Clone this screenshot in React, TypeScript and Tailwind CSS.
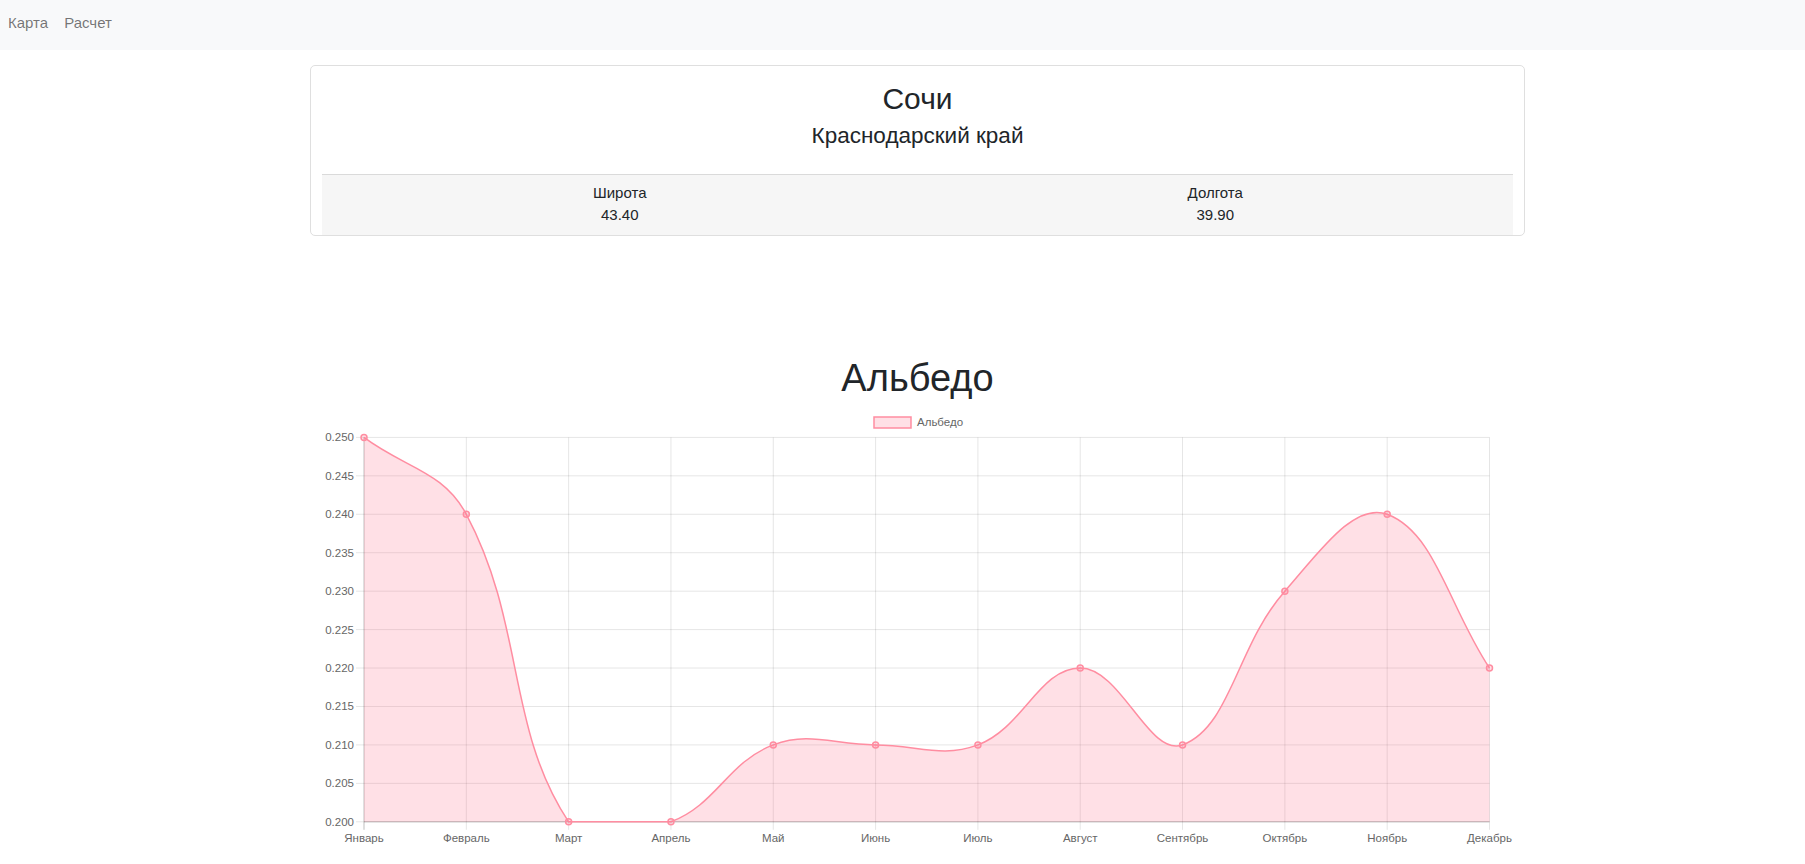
import React from 'react';

const months = ['Январь', 'Февраль', 'Март', 'Апрель', 'Май', 'Июнь', 'Июль', 'Август', 'Сентябрь', 'Октябрь', 'Ноябрь', 'Декабрь'];
const values = [0.25, 0.24, 0.2, 0.2, 0.21, 0.21, 0.21, 0.22, 0.21, 0.23, 0.24, 0.22];

// chart area inside the svg
const W = 1215;
const H = 462;
const left = 54;
const right = 1179.5;
const top = 35.4;
const bottom = 419.8;
const yMin = 0.2;
const yMax = 0.25;

type Pt = { x: number; y: number };

const yOf = (v: number) => bottom - ((v - yMin) / (yMax - yMin)) * (bottom - top);
const clamp = (v: number, lo: number, hi: number) => Math.max(lo, Math.min(hi, v));

function buildPath(pts: Pt[]) {
  const cps = pts.map((cur, i) => {
    const prev = pts[i - 1] ?? cur;
    const next = pts[i + 1] ?? cur;
    const d01 = Math.hypot(cur.x - prev.x, cur.y - prev.y);
    const d12 = Math.hypot(next.x - cur.x, next.y - cur.y);
    let s01 = d01 / (d01 + d12);
    let s12 = d12 / (d01 + d12);
    if (isNaN(s01)) s01 = 0;
    if (isNaN(s12)) s12 = 0;
    const fa = 0.4 * s01;
    const fb = 0.4 * s12;
    return {
      prev: { x: clamp(cur.x - fa * (next.x - prev.x), left, right), y: clamp(cur.y - fa * (next.y - prev.y), top, bottom) },
      next: { x: clamp(cur.x + fb * (next.x - prev.x), left, right), y: clamp(cur.y + fb * (next.y - prev.y), top, bottom) },
    };
  });
  let d = `M ${pts[0].x} ${pts[0].y}`;
  for (let i = 1; i < pts.length; i++) {
    const a = cps[i - 1].next;
    const b = cps[i].prev;
    d += ` C ${a.x} ${a.y} ${b.x} ${b.y} ${pts[i].x} ${pts[i].y}`;
  }
  return d;
}

function AlbedoChart() {
  const step = (right - left) / (months.length - 1);
  const pts = values.map((v, i) => ({ x: left + i * step, y: yOf(v) }));
  const line = buildPath(pts);
  const area = `${line} L ${right} ${bottom} L ${left} ${bottom} Z`;
  const ticks = Array.from({ length: 11 }, (_, i) => yMin + i * 0.005);

  return (
    <svg width={W} height={H} className="block" style={{ fontFamily: '"Liberation Sans", Arial, sans-serif' }}>
      {/* legend */}
      <rect x={564} y={15} width={37} height={11} fill="rgba(255,99,132,0.2)" stroke="#ff8da1" strokeWidth={1.5} />
      <text x={607} y={24} fontSize={11.5} fill="#666">Альбедо</text>

      {/* horizontal grid */}
      {ticks.map((t, i) => {
        const y = yOf(t);
        return (
          <g key={i}>
            <line x1={left - 8} x2={right} y1={y} y2={y} stroke="rgba(0,0,0,0.1)" strokeWidth={1} />
            <text x={left - 10} y={y + 4} fontSize={11.5} fill="#666" textAnchor="end">{t.toFixed(3)}</text>
          </g>
        );
      })}
      {/* vertical grid */}
      {pts.map((p, i) => (
        <g key={i}>
          <line x1={p.x} x2={p.x} y1={top} y2={bottom + 8} stroke={i === 0 ? 'rgba(0,0,0,0.25)' : 'rgba(0,0,0,0.1)'} strokeWidth={1} />
          <text x={p.x} y={440} fontSize={11.5} fill="#666" textAnchor="middle">{months[i]}</text>
        </g>
      ))}
      <line x1={left} x2={right} y1={bottom} y2={bottom} stroke="rgba(0,0,0,0.25)" strokeWidth={1} />

      <path d={area} fill="rgba(255,99,132,0.2)" />
      <path d={line} fill="none" stroke="#ff8da1" strokeWidth={1.5} />
      {pts.map((p, i) => (
        <circle key={i} cx={p.x} cy={p.y} r={3} fill="rgba(255,99,132,0.2)" stroke="#ff8da1" strokeWidth={1.5} />
      ))}
    </svg>
  );
}

export default function App() {
  return (
    <div className="min-h-[864px] bg-white text-[#212529]" style={{ fontFamily: '"Liberation Sans", Arial, sans-serif' }}>
      <nav className="flex h-[50px] items-start bg-[#f8f9fa] pt-[11px]">
        <a className="px-2 text-[15px] leading-6 text-[rgba(0,0,0,0.55)]">Карта</a>
        <a className="px-2 text-[15px] leading-6 text-[rgba(0,0,0,0.55)]">Расчет</a>
      </nav>

      <div className="ml-[310px] mt-[15px] w-[1215px] rounded-[5px] border border-[#dfdfdf] px-[11px] pt-4">
        <h3 className="mb-2 text-center text-[30px] leading-[34px]">Сочи</h3>
        <h5 className="text-center text-[22.5px] leading-[24px]">Краснодарский край</h5>
        <div className="mt-[26px] grid grid-cols-2 border-t border-[#dadada] bg-[#f6f6f6] pb-[9px] pt-[7px] text-center text-[15px] leading-[22px]">
          <div>
            <div>Широта</div>
            <div>43.40</div>
          </div>
          <div>
            <div>Долгота</div>
            <div>39.90</div>
          </div>
        </div>
      </div>

      <div className="ml-[310px] mt-[118px] w-[1215px]">
        <h1 className="text-center text-[38px] leading-[48px]">Альбедо</h1>
        <AlbedoChart />
      </div>
    </div>
  );
}
